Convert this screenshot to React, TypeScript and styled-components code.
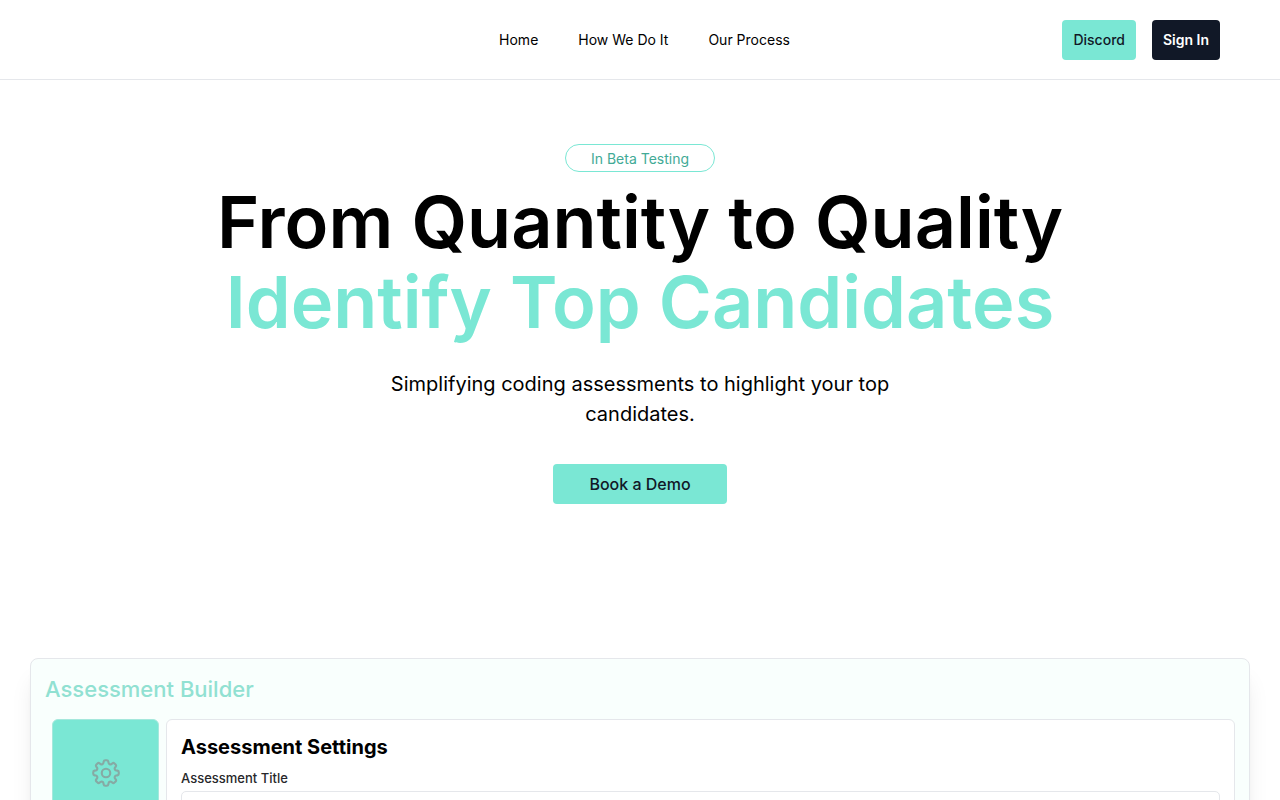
import React from "react";
import styled, { createGlobalStyle } from "styled-components";
import { HiOutlineCog8Tooth } from "react-icons/hi2";

const mint = "#7ae7d4";
const ink = "#111827";
const line = "#e5e7eb";

const GlobalStyle = createGlobalStyle`
  *, *::before, *::after { box-sizing: border-box; }
  body {
    margin: 0;
    background: #ffffff;
    color: #000000;
    font-family: Inter, "Liberation Sans", sans-serif;
    -webkit-font-smoothing: antialiased;
  }
  button, input { font: inherit; }
`;

const Page = styled.div`
  padding-bottom: 60px;
`;

const Header = styled.header`
  display: grid;
  grid-template-columns: 1fr auto 1fr;
  align-items: center;
  min-height: 80px;
  padding: 0 60px;
  border-bottom: 1px solid ${line};
`;

const Nav = styled.nav`
  grid-column: 2;
  display: flex;
  gap: 40px;
  padding-left: 9px;
`;

const NavLink = styled.a`
  color: #000000;
  font-size: 14px;
  line-height: 20px;
  text-decoration: none;
`;

const Actions = styled.div`
  display: flex;
  justify-content: flex-end;
  gap: 16px;
`;

const Button = styled.button<{ $dark?: boolean; $wide?: boolean }>`
  height: 40px;
  padding: 0 ${({ $wide }) => ($wide ? 36 : 11)}px;
  border: 0;
  border-radius: 4px;
  background: ${({ $dark }) => ($dark ? ink : mint)};
  color: ${({ $dark }) => ($dark ? "#ffffff" : ink)};
  font-size: ${({ $wide }) => ($wide ? 16 : 14)}px;
  font-weight: ${({ $dark }) => ($dark ? 600 : 500)};
  line-height: 20px;
  cursor: pointer;
`;

const Hero = styled.section`
  display: flex;
  flex-direction: column;
  align-items: center;
  padding: 64px 24px 0;
  text-align: center;
`;

const Badge = styled.span`
  padding: 4px 25px 2px;
  border: 1px solid ${mint};
  border-radius: 14px;
  color: #42aa96;
  font-size: 14px;
  line-height: 20px;
`;

const Title = styled.h1`
  margin: 10px 0 0;
  font-size: 72px;
  font-weight: 600;
  line-height: 80px;
`;

const Accent = styled.span`
  display: block;
  color: ${mint};
`;

const Lead = styled.p`
  max-width: 512px;
  margin: 27px 0 35px;
  font-size: 20px;
  line-height: 30px;
`;

const Preview = styled.section`
  margin: 154px 30px 0;
  padding: 14px;
  border: 1px solid ${line};
  border-radius: 8px;
  background: #f9fffd;
  box-shadow: 0 20px 25px -5px rgba(0, 0, 0, 0.1), 0 8px 10px -6px rgba(0, 0, 0, 0.1);
`;

const PreviewTitle = styled.h2`
  margin: 0 0 14px;
  color: #91e1d2;
  font-size: 22px;
  font-weight: 500;
  line-height: 32px;
`;

const Workspace = styled.div`
  display: flex;
  gap: 7px;
  padding-left: 7px;
`;

const StepTile = styled.button`
  display: flex;
  align-items: center;
  justify-content: center;
  width: 107px;
  height: 108px;
  padding: 0;
  border: 1px solid #a5e8dc;
  border-radius: 6px;
  background: ${mint};
  color: #86aaa4;
`;

const Settings = styled.form`
  flex: 1;
  padding: 13px 14px;
  border: 1px solid ${line};
  border-radius: 6px;
  background: #ffffff;
`;

const SettingsTitle = styled.h3`
  margin: 0 0 7px;
  font-size: 20px;
  font-weight: 700;
  line-height: 28px;
`;

const Label = styled.label`
  display: block;
  margin-bottom: 3px;
  color: #27272a;
  font-size: 13px;
  font-weight: 500;
  line-height: 20px;
`;

const TextField = styled.input`
  display: block;
  width: 100%;
  height: 36px;
  padding: 0 12px;
  border: 1px solid ${line};
  border-radius: 5px;
  background: #ffffff;
`;

const links = [
  { label: "Home", href: "#home" },
  { label: "How We Do It", href: "#how" },
  { label: "Our Process", href: "#process" },
];

export default function App() {
  return (
    <Page>
      <GlobalStyle />
      <Header>
        <Nav>
          {links.map((link) => (
            <NavLink key={link.href} href={link.href}>
              {link.label}
            </NavLink>
          ))}
        </Nav>
        <Actions>
          <Button type="button">Discord</Button>
          <Button type="button" $dark>
            Sign In
          </Button>
        </Actions>
      </Header>
      <main>
        <Hero id="home">
          <Badge>In Beta Testing</Badge>
          <Title>
            From Quantity to Quality
            <Accent>Identify Top Candidates</Accent>
          </Title>
          <Lead>Simplifying coding assessments to highlight your top candidates.</Lead>
          <Button type="button" $wide>
            Book a Demo
          </Button>
        </Hero>
        <Preview id="how">
          <PreviewTitle>Assessment Builder</PreviewTitle>
          <Workspace>
            <StepTile type="button" aria-label="Settings">
              <HiOutlineCog8Tooth size={34} />
            </StepTile>
            <Settings>
              <SettingsTitle>Assessment Settings</SettingsTitle>
              <Label htmlFor="assessment-title">Assessment Title</Label>
              <TextField id="assessment-title" type="text" />
            </Settings>
          </Workspace>
        </Preview>
      </main>
    </Page>
  );
}
